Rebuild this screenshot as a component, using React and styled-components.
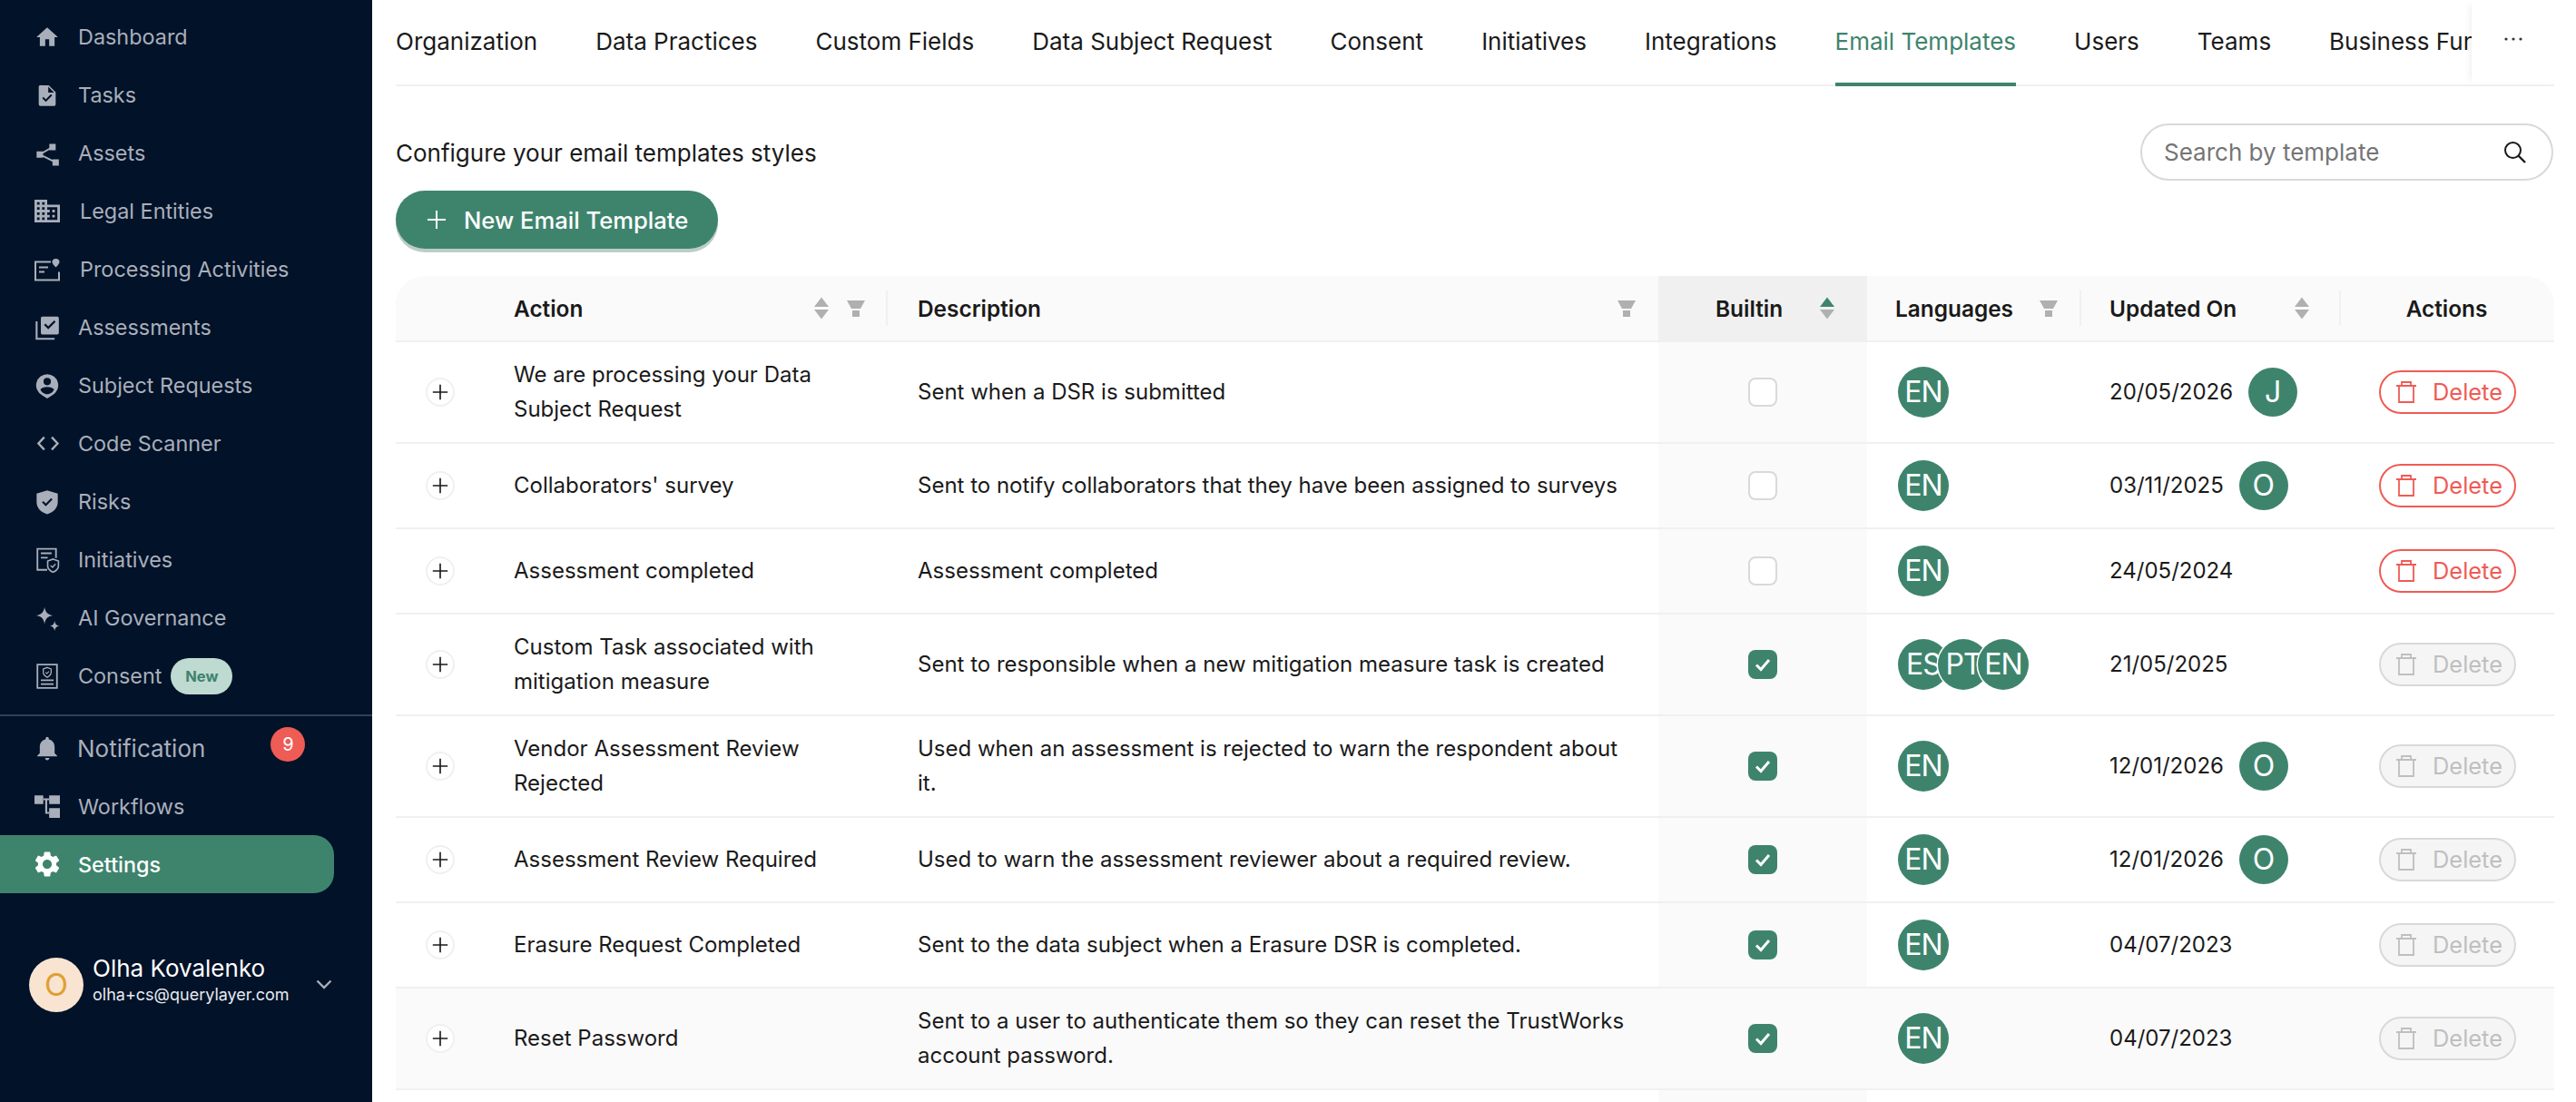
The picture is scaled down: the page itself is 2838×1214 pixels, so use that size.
import React from 'react';
import styled, { createGlobalStyle } from 'styled-components';

const Global = createGlobalStyle`
  html, body { margin: 0; padding: 0; background: #fff; }
  body { font-family: Inter, "Liberation Sans", sans-serif; color: #1a1a1a; }
  * { box-sizing: border-box; }
`;

const Shell = styled.div`
  display: flex;
  width: 2838px;
  height: 1214px;
  overflow: hidden;
`;

const Sidebar = styled.aside`
  width: 410px;
  flex: none;
  background: #011229;
  padding-top: 8.5px;
  display: flex;
  flex-direction: column;
`;

const NavItem = styled.div`
  height: 64px;
  flex: none;
  display: flex;
  align-items: center;
  padding-left: 38px;
  width: 368px;
  font-size: 23.4px;
  color: ${p => (p.$active ? '#fff' : '#a9afba')};
  background: ${p => (p.$active ? '#3e846d' : 'transparent')};
  border-radius: ${p => (p.$active ? '0 22px 22px 0' : '0')};
  font-weight: ${p => (p.$active ? 500 : 400)};
`;

const NavIcon = styled.span`
  width: 28px;
  height: 28px;
  flex: none;
  display: flex;
  align-items: center;
  justify-content: center;
  margin-right: ${p => p.$gap || 20}px;
  svg { display: block; }
`;

const NotificationLabel = styled.span`
  font-size: 26px;
`;

const Counter = styled.span`
  width: 38px;
  height: 38px;
  border-radius: 50%;
  background: #ef5b55;
  color: #fff;
  font-size: 20px;
  display: flex;
  align-items: center;
  justify-content: center;
  margin-left: 72px;
  margin-top: -8px;
`;

const NewPill = styled.span`
  width: 68px;
  height: 40px;
  border-radius: 20px;
  background: #bfdad1;
  color: #3e846d;
  font-size: 16.5px;
  font-weight: 700;
  display: flex;
  align-items: center;
  justify-content: center;
  margin-left: 10px;
`;

const Divider = styled.div`
  height: 2px;
  flex: none;
  background: #343f50;
  margin: 10.5px 0 3px;
`;

const Profile = styled.div`
  display: flex;
  align-items: center;
  margin-top: 67px;
  padding-left: 32px;
`;

const ProfileAvatar = styled.div`
  width: 60px;
  height: 60px;
  border-radius: 50%;
  background: #f9e4d2;
  color: #e0a030;
  font-size: 34px;
  display: flex;
  align-items: center;
  justify-content: center;
  margin-right: 10px;
`;

const ProfileText = styled.div`
  width: 246px;
  display: flex;
  flex-direction: column;
  color: #fff;
  margin-bottom: 9px;
`;

const ProfileName = styled.span`
  font-size: 26px;
  line-height: 32px;
`;

const ProfileMail = styled.span`
  font-size: 18px;
  line-height: 26px;
  color: #e8eaee;
`;

const Main = styled.main`
  flex: 1;
  min-width: 0;
  padding: 0 24px 0 26px;
  display: flex;
  flex-direction: column;
`;

const TabBar = styled.div`
  height: 95px;
  flex: none;
  display: flex;
  box-shadow: inset 0 -2px 0 #f0f0f0;
`;

const TabList = styled.div`
  flex: 1;
  min-width: 0;
  display: flex;
  gap: 64px;
  overflow: hidden;
`;

const Tab = styled.div`
  flex: none;
  height: 95px;
  display: flex;
  align-items: center;
  font-size: 26px;
  white-space: nowrap;
  color: ${p => (p.$active ? '#3e846d' : '#1a1a1a')};
  border-bottom: 4px solid ${p => (p.$active ? '#3e846d' : 'transparent')};
`;

const MoreTab = styled.div`
  width: 91px;
  flex: none;
  height: 95px;
  display: flex;
  align-items: center;
  justify-content: center;
  padding-bottom: 8px;
  border-bottom: 2px solid #f0f0f0;
  box-shadow: -6px 0 8px -6px rgba(0,0,0,.1);
  background: #fff;
`;

const Toolbar = styled.div`
  display: flex;
  flex: none;
  justify-content: space-between;
  align-items: center;
  margin-top: 41px;
`;

const Subtitle = styled.div`
  font-size: 26px;
  margin-top: 2px;
`;

const Search = styled.div`
  width: 455px;
  height: 63px;
  margin-right: 1px;
  border: 2px solid #d9d9d9;
  border-radius: 32px;
  display: flex;
  align-items: center;
  justify-content: space-between;
  padding: 0 26px 0 24px;
  font-size: 26px;
  color: #757575;
`;

const PrimaryButton = styled.div`
  width: 355px;
  height: 64px;
  flex: none;
  margin-top: 11px;
  border-radius: 32px;
  background: #3e846d;
  box-shadow: 0 4px 0 #bccdc6;
  color: #fff;
  font-size: 25.6px;
  font-weight: 500;
  display: flex;
  align-items: center;
  gap: 19px;
  padding-left: 34px;
`;

const Table = styled.div`
  margin-top: 30px;
  width: 2378px;
  flex: none;
  display: flex;
  flex-direction: column;
`;

const columns = '98px 442px 851px 230px 234px 286px 237px';

const HeadRow = styled.div`
  display: grid;
  grid-template-columns: ${columns};
  height: 73px;
  background: #fafafa;
  border-bottom: 2px solid #f0f0f0;
  border-radius: 32px 32px 0 0;
  overflow: hidden;
`;

const HeadCell = styled.div`
  display: flex;
  align-items: center;
  justify-content: ${p => (p.$center ? 'center' : 'flex-start')};
  position: relative;
  font-size: 24.4px;
  font-weight: 600;
  padding: 0 ${p => p.$right ?? 24}px 0 ${p => p.$left ?? 33}px;
  background: ${p => (p.$sorted ? '#f0f0f0' : 'transparent')};
  &::before {
    content: '';
    display: ${p => (p.$rule ? 'block' : 'none')};
    position: absolute;
    left: 0;
    top: 16px;
    bottom: 16px;
    width: 2px;
    background: #f0f0f0;
  }
`;

const HeadTitle = styled.span`
  flex: ${p => (p.$center ? 'none' : 1)};
`;

const HeadIcons = styled.span`
  display: flex;
  align-items: center;
  gap: 20px;
`;

const Row = styled.div`
  display: grid;
  grid-template-columns: ${columns};
  min-height: ${p => (p.$tall ? 112 : 94)}px;
  border-bottom: 2px solid #f0f0f0;
  background: ${p => (p.$hover ? '#fafafa' : '#fff')};
`;

const Cell = styled.div`
  display: flex;
  align-items: center;
  font-size: 24px;
  line-height: 38px;
  padding: 0 ${p => p.$right ?? 33}px 0 ${p => p.$left ?? 33}px;
  justify-content: ${p => (p.$center ? 'center' : 'flex-start')};
  background: ${p => (p.$shade ? '#fafafa' : 'transparent')};
`;

const ExpandButton = styled.span`
  width: 32px;
  height: 32px;
  border-radius: 50%;
  border: 2px solid #f0f0f0;
  background: #fff;
  display: flex;
  align-items: center;
  justify-content: center;
`;

const Check = styled.span`
  width: 32px;
  height: 32px;
  border-radius: 8px;
  display: flex;
  align-items: center;
  justify-content: center;
  background: ${p => (p.$on ? '#3e846d' : '#fff')};
  border: ${p => (p.$on ? 'none' : '2px solid #d9d9d9')};
`;

const Badges = styled.div`
  display: flex;
`;

const LangBadge = styled.span`
  width: 56px;
  height: 56px;
  flex: none;
  border-radius: 50%;
  background: #3e846d;
  color: #fff;
  font-size: 32px;
  letter-spacing: -1px;
  overflow: hidden;
  display: flex;
  align-items: center;
  justify-content: center;
  box-shadow: 0 0 0 1.5px #fff;
  margin-left: ${p => (p.$stack ? -12 : 0)}px;
`;

const DateText = styled.span`
  white-space: nowrap;
`;

const UserBadge = styled.span`
  width: 54px;
  height: 54px;
  flex: none;
  border-radius: 50%;
  background: #3e846d;
  color: #fff;
  font-size: 32px;
  display: flex;
  align-items: center;
  justify-content: center;
  margin-left: 17px;
`;

const DeleteButton = styled.div`
  width: 151px;
  height: 48px;
  border-radius: 24px;
  display: flex;
  align-items: center;
  gap: 18px;
  padding-left: 17px;
  font-size: 25.4px;
  color: ${p => (p.$off ? '#bfbfbf' : '#ef5b55')};
  border: 2px solid ${p => (p.$off ? '#d9d9d9' : '#ef5b55')};
  background: ${p => (p.$off ? '#f5f5f5' : '#fff')};
`;

const Ico = ({ w = 28, h = 28, children, vb = '0 0 24 24', fill = 'currentColor' }) => (
  <svg width={w} height={h} viewBox={vb} fill={fill}>{children}</svg>
);

const Home = () => <Ico w={26} h={26}><path d="M10 21v-7h4v7h5.500v-9H23L12 2 1 12h3.500v9z" /></Ico>;
const TaskIcon = () => (
  <Ico w={28} h={28}>
    <path fillRule="evenodd" d="M6 2.500h7.500L20 9v11.500a1.500 1.500 0 0 1-1.500 1.500h-13A1.500 1.500 0 0 1 4 20.500V4A1.500 1.500 0 0 1 6 2.500zM13 3.800V9.500h5.500zM10.700 18.200l6-6-1.200-1.200-4.800 4.800-2.200-2.200-1.200 1.200z" />
  </Ico>
);
const ShareIcon = () => (
  <Ico w={28} h={28}>
    <path d="M14 3h6v6h-6zM2 10h6v6H2zM17 17.500h6v6h-6z" />
    <path d="M5 13l12-7M5 13l15 7.500" stroke="currentColor" strokeWidth="1.600" fill="none" />
  </Ico>
);
const Domain = () => (
  <Ico w={29} h={27} vb="2 3 20 18">
    <path d="M12 7V3H2v18h20V7H12zM6 19H4v-2h2v2zm0-4H4v-2h2v2zm0-4H4V9h2v2zm0-4H4V5h2v2zm4 12H8v-2h2v2zm0-4H8v-2h2v2zm0-4H8V9h2v2zm0-4H8V5h2v2zm10 12h-8v-2h2v-2h-2v-2h2v-2h-2V9h8v10zm-2-8h-2v2h2v-2zm0 4h-2v2h2v-2z" />
  </Ico>
);
const Processing = () => (
  <Ico w={29} h={26} vb="0 0 28 25">
    <path d="M18 4H1v20h26v-9" stroke="currentColor" strokeWidth="2" fill="none" />
    <path d="M5 10h10M5 15h6" stroke="currentColor" strokeWidth="2" fill="none" />
    <path d="M23.500 0.500 c2.500 0 4 1.500 4 3.500 0 2-2 4-4 6-2-2-4-4-4-6 0-2 1.500-3.500 4-3.500z" />
  </Ico>
);
const Assess = () => (
  <Ico w={28} h={28}>
    <path fillRule="evenodd" d="M7.500 1.500h14a1.500 1.500 0 0 1 1.500 1.500v14a1.500 1.500 0 0 1-1.500 1.500h-14A1.500 1.500 0 0 1 6 17V3a1.500 1.500 0 0 1 1.500-1.500zM13 13.500l7-7-1.400-1.400-5.600 5.600-2.600-2.600L9 9.500z" />
    <path d="M2 6v16.500h17" stroke="currentColor" strokeWidth="1.800" fill="none" />
  </Ico>
);
const Subject = () => (
  <Ico w={28} h={28}>
    <path fillRule="evenodd" d="M12 1a10.500 10.500 0 0 1 5 19.700L12 24l-5-3.300A10.500 10.500 0 0 1 12 1zm0 3.500a3.500 3.500 0 1 0 0 7 3.500 3.500 0 0 0 0-7zM5.500 15.500c1 2.500 3.500 4.500 6.500 4.500s5.500-2 6.500-4.500c-1-1.500-3.500-2.500-6.500-2.500s-5.500 1-6.500 2.500z" />
  </Ico>
);
const Code = () => (
  <Ico w={28} h={22} fill="none">
    <path d="M8.500 4 1.500 11.500l7 7.500M17.500 4l7 7.500-7 7.500" stroke="currentColor" strokeWidth="2.600" />
  </Ico>
);
const Risk = () => (
  <Ico w={28} h={28}>
    <path fillRule="evenodd" d="M12 1l10 3v8c0 6-4.500 10-10 11.500C6.500 22 2 18 2 12V4zM10.700 16l6.300-6.300-1.300-1.300-5 5-2.300-2.300L7.100 12.400z" />
  </Ico>
);
const Initiative = () => (
  <Ico w={28} h={28} fill="none" vb="0 0 24 26">
    <path d="M12 23H2V1.500h19V11" stroke="currentColor" strokeWidth="1.700" />
    <path d="M5.500 6h11M5.500 10.500h7" stroke="currentColor" strokeWidth="1.700" />
    <path d="M18 12l5.500 2v5c0 3-2.500 5-5.500 6.500-3-1.500-5.500-3.500-5.500-6.500v-5z" stroke="currentColor" strokeWidth="1.500" fill="#011229" />
    <path d="M15.500 18.500l2 2 3-3.500" stroke="currentColor" strokeWidth="1.300" />
  </Ico>
);
const Sparkle = () => (
  <Ico w={28} h={28}>
    <path d="M9.500 1.500c.8 5 3 7.200 8 8-5 .8-7.200 3-8 8-.8-5-3-7.200-8-8 5-.8 7.200-3 8-8zM19 14.500c.4 3 1.800 4.400 4.500 4.800-2.700.4-4.100 1.800-4.500 4.700-.4-2.900-1.800-4.300-4.500-4.700 2.700-.4 4.100-1.800 4.500-4.800z" />
  </Ico>
);
const ConsentIcon = () => (
  <Ico w={26} h={28} fill="none" vb="0 0 22 26">
    <path d="M1 1h20v24H1z" stroke="currentColor" strokeWidth="1.700" />
    <path d="M11 4l4 1.500v3.500c0 2.500-2 4-4 5-2-1-4-2.500-4-5V5.500z" stroke="currentColor" strokeWidth="1.200" />
    <path d="M9.300 9l1.300 1.300 2.200-2.300" stroke="currentColor" strokeWidth="1" />
    <path d="M4.500 17h13M4.500 21h13" stroke="currentColor" strokeWidth="1.700" />
  </Ico>
);
const Bell = () => (
  <Ico w={28} h={30}>
    <path d="M12 23.500c1.100 0 2-.9 2-2h-4c0 1.100.9 2 2 2zm7-6.500v-6c0-3.500-1.900-6.300-5.500-7.100V3c0-.8-.7-1.500-1.500-1.500S10.500 2.200 10.500 3v.9C6.900 4.700 5 7.500 5 11v6l-2.500 2.500v.5h19v-.5z" />
  </Ico>
);
const Flow = () => (
  <Ico w={28} h={26} vb="0 0 26 24">
    <path d="M0 1h9v9H0zM15 1h11v9H15zM15 14h11v10H15z" />
    <path d="M9 5h6M12 5v14h3" stroke="currentColor" strokeWidth="2" fill="none" />
  </Ico>
);
const Gear = () => (
  <Ico w={30} h={30} vb="2 2 20 20">
    <path d="M19.140 12.940c.04-.3.06-.61.06-.94 0-.32-.02-.64-.07-.94l2.030-1.580c.18-.14.23-.41.12-.61l-1.920-3.320c-.12-.22-.37-.29-.59-.22l-2.390.96c-.5-.38-1.030-.7-1.620-.94l-.36-2.540c-.04-.24-.24-.41-.48-.41h-3.840c-.24 0-.43.17-.47.41l-.36 2.540c-.59.24-1.130.57-1.620.94l-2.390-.96c-.22-.08-.47 0-.59.22L2.740 8.870c-.12.21-.08.47.12.61l2.030 1.580c-.05.3-.09.63-.09.94s.02.64.07.94l-2.030 1.580c-.18.14-.23.41-.12.61l1.920 3.320c.12.22.37.29.59.22l2.390-.96c.5.38 1.030.7 1.620.94l.36 2.540c.05.24.24.41.48.41h3.840c.24 0 .44-.17.47-.41l.36-2.540c.59-.24 1.130-.56 1.620-.94l2.390.96c.22.08.47 0 .59-.22l1.920-3.320c.12-.22.07-.47-.12-.61l-2.010-1.580zM12 15.600c-1.980 0-3.600-1.620-3.600-3.600s1.620-3.600 3.600-3.600 3.600 1.620 3.600 3.600-1.620 3.600-3.600 3.600z" />
  </Ico>
);
const Chevron = () => (
  <svg width="18" height="11" viewBox="0 0 18 11" fill="none" style={{ display: 'block' }}>
    <path d="M1.500 1.500 9 9l7.500-7.500" stroke="#a9afba" strokeWidth="2.400" />
  </svg>
);
const Plus = ({ size = 22, sw = 2, color = 'currentColor' }) => (
  <svg width={size} height={size} viewBox="0 0 22 22" fill="none" style={{ display: 'block', flex: 'none' }}>
    <path d="M11 1v20M1 11h20" stroke={color} strokeWidth={sw} />
  </svg>
);
const SearchGlyph = () => (
  <svg width="28" height="28" viewBox="0 0 28 28" fill="none" style={{ display: 'block' }}>
    <circle cx="11.500" cy="11.500" r="8.500" stroke="#1a1a1a" strokeWidth="2" />
    <path d="M17.500 17.500 25 25" stroke="#1a1a1a" strokeWidth="2.400" />
  </svg>
);
const Dots = () => (
  <svg width="22" height="6" viewBox="0 0 22 6" style={{ display: 'block' }}>
    <circle cx="3" cy="3" r="1.600" fill="#333" /><circle cx="11" cy="3" r="1.600" fill="#333" /><circle cx="19" cy="3" r="1.600" fill="#333" />
  </svg>
);
const Sort = ({ up }) => (
  <svg width="16" height="25" viewBox="0 0 16 25" style={{ display: 'block', flex: 'none' }}>
    <path d="M8 0.500l8 10.500H0z" fill={up ? '#3e846d' : '#b0b0b0'} />
    <path d="M8 24.500 0 14h16z" fill="#b0b0b0" />
  </svg>
);
const Filter = () => (
  <svg width="20" height="18" viewBox="0 0 20 18" style={{ display: 'block', flex: 'none' }}>
    <path d="M0 0h20l-5 9H5zM6 11h8v7H6z" fill="#b0b0b0" />
  </svg>
);
const CheckMark = () => (
  <svg width="20" height="18" viewBox="0 0 20 18" fill="none" style={{ display: 'block' }}>
    <path d="M3 9.500 8 14.500 17 4" stroke="#fff" strokeWidth="3" />
  </svg>
);
const Trash = ({ color }) => (
  <svg width="22" height="24" viewBox="0 0 22 24" fill="none" style={{ display: 'block', flex: 'none' }}>
    <path d="M0 5h22M6 5V1h10v4M3 5v18h16V5" stroke={color} strokeWidth="1.800" />
  </svg>
);

const nav = [
  [Home, 'Dashboard'],
  [TaskIcon, 'Tasks'],
  [ShareIcon, 'Assets'],
  [Domain, 'Legal Entities', 22],
  [Processing, 'Processing Activities', 22],
  [Assess, 'Assessments'],
  [Subject, 'Subject Requests'],
  [Code, 'Code Scanner'],
  [Risk, 'Risks'],
  [Initiative, 'Initiatives'],
  [Sparkle, 'AI Governance'],
];

const tabs = ['Organization', 'Data Practices', 'Custom Fields', 'Data Subject Request', 'Consent', 'Initiatives', 'Integrations', 'Email Templates', 'Users', 'Teams', 'Business Functions'];

const rows = [
  { a: 'We are processing your Data Subject Request', d: 'Sent when a DSR is submitted', on: false, l: ['EN'], t: '20/05/2026', u: 'J', tall: true },
  { a: "Collaborators' survey", d: 'Sent to notify collaborators that they have been assigned to surveys', on: false, l: ['EN'], t: '03/11/2025', u: 'O' },
  { a: 'Assessment completed', d: 'Assessment completed', on: false, l: ['EN'], t: '24/05/2024' },
  { a: 'Custom Task associated with mitigation measure', d: 'Sent to responsible when a new mitigation measure task is created', on: true, l: ['ES', 'PT', 'EN'], t: '21/05/2025', tall: true },
  { a: 'Vendor Assessment Review Rejected', d: 'Used when an assessment is rejected to warn the respondent about it.', on: true, l: ['EN'], t: '12/01/2026', u: 'O', tall: true },
  { a: 'Assessment Review Required', d: 'Used to warn the assessment reviewer about a required review.', on: true, l: ['EN'], t: '12/01/2026', u: 'O' },
  { a: 'Erasure Request Completed', d: 'Sent to the data subject when a Erasure DSR is completed.', on: true, l: ['EN'], t: '04/07/2023' },
  { a: 'Reset Password', d: 'Sent to a user to authenticate them so they can reset the TrustWorks account password.', on: true, l: ['EN'], t: '04/07/2023', tall: true, hover: true },
];

export default function App() {
  return (
    <Shell>
      <Global />
      <Sidebar>
        {nav.map(([I, label, gap]) => (
          <NavItem key={label}><NavIcon $gap={gap}><I /></NavIcon>{label}</NavItem>
        ))}
        <NavItem><NavIcon><ConsentIcon /></NavIcon>Consent<NewPill>New</NewPill></NavItem>
        <Divider />
        <NavItem><NavIcon $gap={19}><Bell /></NavIcon><NotificationLabel>Notification</NotificationLabel><Counter>9</Counter></NavItem>
        <NavItem><NavIcon><Flow /></NavIcon>Workflows</NavItem>
        <NavItem $active><NavIcon><Gear /></NavIcon>Settings</NavItem>
        <Profile>
          <ProfileAvatar>O</ProfileAvatar>
          <ProfileText>
            <ProfileName>Olha Kovalenko</ProfileName>
            <ProfileMail>olha+cs@querylayer.com</ProfileMail>
          </ProfileText>
          <Chevron />
        </Profile>
      </Sidebar>
      <Main>
        <TabBar>
          <TabList>
            {tabs.map(t => <Tab key={t} $active={t === 'Email Templates'}>{t}</Tab>)}
          </TabList>
          <MoreTab><Dots /></MoreTab>
        </TabBar>
        <Toolbar>
          <Subtitle>Configure your email templates styles</Subtitle>
          <Search>Search by template<SearchGlyph /></Search>
        </Toolbar>
        <PrimaryButton><Plus />New Email Template</PrimaryButton>
        <Table>
          <HeadRow>
            <HeadCell />
            <HeadCell $left={32} $right={23}><HeadTitle>Action</HeadTitle><HeadIcons><Sort /><Filter /></HeadIcons></HeadCell>
            <HeadCell $rule $left={35} $right={25}><HeadTitle>Description</HeadTitle><Filter /></HeadCell>
            <HeadCell $sorted $left={63} $right={36}><HeadTitle>Builtin</HeadTitle><Sort up /></HeadCell>
            <HeadCell $left={31}><HeadTitle>Languages</HeadTitle><Filter /></HeadCell>
            <HeadCell $rule $right={33}><HeadTitle>Updated On</HeadTitle><Sort /></HeadCell>
            <HeadCell $rule $center $left={0} $right={0}><HeadTitle $center>Actions</HeadTitle></HeadCell>
          </HeadRow>
          {rows.map(r => (
            <Row key={r.a} $tall={r.tall} $hover={r.hover}>
              <Cell $center $left={0} $right={0}><ExpandButton><Plus size={18} sw={2} color="#1a1a1a" /></ExpandButton></Cell>
              <Cell $left={32}>{r.a}</Cell>
              <Cell $left={35}>{r.d}</Cell>
              <Cell $center $shade><Check $on={r.on}>{r.on && <CheckMark />}</Check></Cell>
              <Cell $left={34}>
                <Badges>{r.l.map((x, i) => <LangBadge key={x} $stack={i > 0}>{x}</LangBadge>)}</Badges>
              </Cell>
              <Cell>
                <DateText>{r.t}</DateText>
                {r.u && <UserBadge>{r.u}</UserBadge>}
              </Cell>
              <Cell $left={44} $right={0}>
                <DeleteButton $off={r.on}><Trash color={r.on ? '#bfbfbf' : '#ef5b55'} />Delete</DeleteButton>
              </Cell>
            </Row>
          ))}
          <Row>
            <Cell /><Cell /><Cell /><Cell $shade /><Cell /><Cell /><Cell />
          </Row>
        </Table>
      </Main>
    </Shell>
  );
}
